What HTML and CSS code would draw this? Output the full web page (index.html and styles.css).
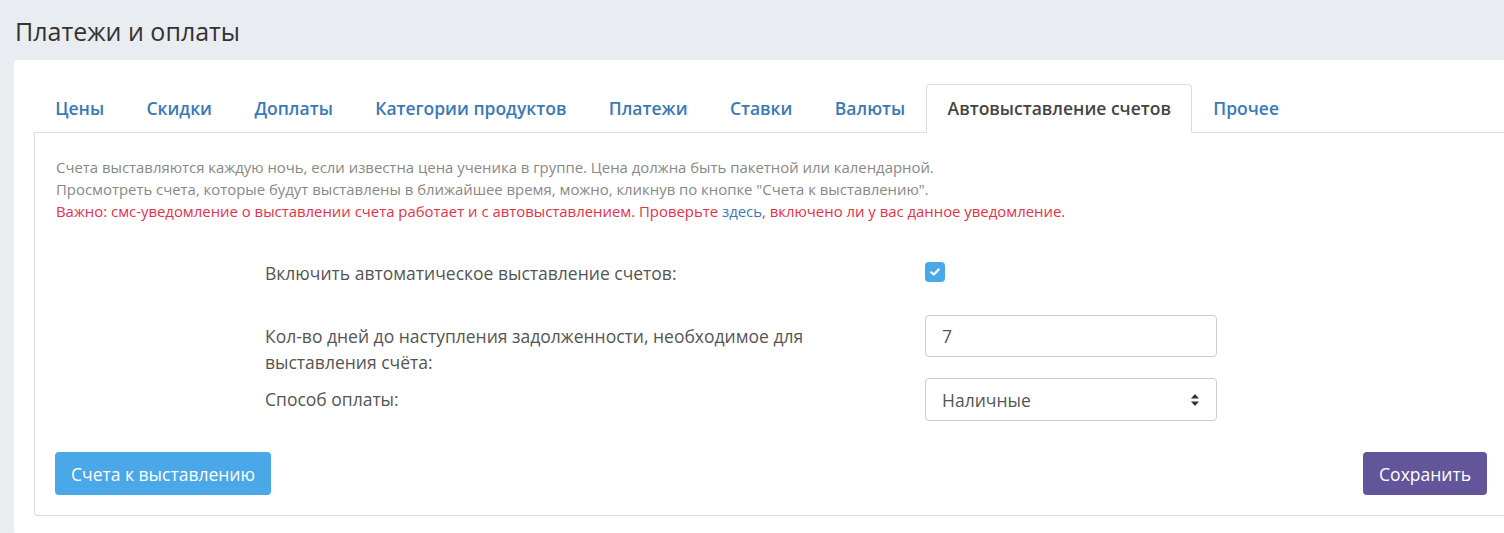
FILE: index.html
```html
<!DOCTYPE html>
<html>
<head>
    <title>Платежи и оплаты</title>
    <link rel="stylesheet" href="styles.css">
</head>
<body>
    <h1 class="page-title">Платежи и оплаты</h1>

    <div class="card">
        <ul class="nav-tabs">
            <li><a href="#">Цены</a></li>
            <li><a href="#">Скидки</a></li>
            <li><a href="#">Доплаты</a></li>
            <li><a href="#">Категории продуктов</a></li>
            <li><a href="#">Платежи</a></li>
            <li><a href="#">Ставки</a></li>
            <li><a href="#">Валюты</a></li>
            <li class="active"><a href="#">Автовыставление счетов</a></li>
            <li><a href="#">Прочее</a></li>
        </ul>

        <div class="tab-panel">
            <div class="help-text">
                <p>Счета выставляются каждую ночь, если известна цена ученика в группе. Цена должна быть пакетной или календарной.</p>
                <p>Просмотреть счета, которые будут выставлены в ближайшее время, можно, кликнув по кнопке "Счета к выставлению".</p>
                <p class="warn">Важно: смс-уведомление о выставлении счета работает и с автовыставлением. Проверьте <a href="#">здесь</a>, включено ли у вас данное уведомление.</p>
            </div>

            <form class="settings" onsubmit="return false;">
                <div class="form-row row-check">
                    <label for="auto">Включить автоматическое выставление счетов:</label>
                    <div class="control">
                        <span class="checkbox" id="auto">
                            <svg width="10" height="8" viewBox="0 0 10 8"><path d="M1.3 4.3 L3.8 6.5 L8.7 1.5" fill="none" stroke="#fff" stroke-width="2.2" stroke-linecap="round" stroke-linejoin="round"/></svg>
                        </span>
                    </div>
                </div>
                <div class="form-row row-days">
                    <label for="days">Кол-во дней до наступления задолженности, необходимое для выставления счёта:</label>
                    <div class="control">
                        <input type="text" id="days" value="7">
                    </div>
                </div>
                <div class="form-row">
                    <label for="method">Способ оплаты:</label>
                    <div class="control">
                        <div class="select" id="method">
                            <span>Наличные</span>
                            <svg width="10" height="14" viewBox="0 0 10 14"><path d="M5 1 L9 5.5 H1 Z M5 13 L9 8.5 H1 Z" fill="#333"/></svg>
                        </div>
                    </div>
                </div>

                <div class="actions">
                    <button type="button" class="btn btn-blue">Счета к выставлению</button>
                    <button type="submit" class="btn btn-purple">Сохранить</button>
                </div>
            </form>
        </div>
    </div>
</body>
</html>
```

FILE: styles.css
```css
html, body {
    overflow: hidden;
}

body {
    background-color: #e9ecf1;
    color: #555;
    font-family: "Open Sans", Arial, sans-serif;
    margin: 0;
    padding: 0 0 0 14px;
}

.page-title {
    font-size: 25px;
    font-weight: 400;
    color: #333;
    margin: 0;
    padding: 14px 0 0 1px;
    line-height: 34px;
    height: 46px;
}

.card {
    background-color: white;
    border-radius: 4px;
    width: 1474px;
    padding: 24px 20px 18px 20px;
}

.nav-tabs {
    list-style: none;
    margin: 0;
    padding: 0;
    display: flex;
    border-bottom: 1px solid #ddd;
}

.nav-tabs li {
    margin-bottom: -1px;
}

.nav-tabs a {
    display: block;
    padding: 11px 20.2px 12px;
    font-size: 17.5px;
    line-height: 24px;
    font-weight: 600;
    color: #3a79b7;
    text-decoration: none;
    border: 1px solid transparent;
    border-radius: 4px 4px 0 0;
}

.nav-tabs .active a {
    color: #444;
    background-color: white;
    border-color: #ddd #ddd white;
}

.tab-panel {
    border: 1px solid #ddd;
    border-top: none;
    border-radius: 0 0 0 4px;
    padding: 23px 20px 20px 20px;
}

.help-text {
    font-size: 14.9px;
    line-height: 22px;
    color: #888;
    padding-left: 1px;
}

.help-text p {
    margin: 0;
}

.help-text .warn {
    color: #e8304a;
}

.help-text a {
    color: #3a79b7;
    text-decoration: none;
}

.settings {
    margin-top: 30px;
}

.form-row {
    display: grid;
    grid-template-columns: 580px 292px;
    column-gap: 80px;
    padding-left: 210px;
    margin-bottom: 3px;
}

.form-row label {
    font-size: 17.5px;
    line-height: 26px;
    padding-top: 8px;
    color: #555;
}

.row-check {
    margin-bottom: 29px;
}

.row-check .control {
    padding-top: 10px;
}

.checkbox {
    display: flex;
    align-items: center;
    justify-content: center;
    width: 20px;
    height: 20px;
    border-radius: 4px;
    background-color: #4aa8e8;
}

.control input,
.select {
    box-sizing: border-box;
    width: 292px;
    height: 43px;
    border: 1px solid #ccc;
    border-radius: 4px;
    padding: 0 16px;
    font-family: "Open Sans", Arial, sans-serif;
    font-size: 17.5px;
    color: #555;
    background: white;
}

.control input {
    height: 42px;
}

.select {
    display: flex;
    align-items: center;
    justify-content: space-between;
    padding-right: 16px;
}

.actions {
    display: flex;
    justify-content: space-between;
    margin-top: 31px;
}

.btn {
    border: none;
    border-radius: 4px;
    color: white;
    font-family: "Open Sans", Arial, sans-serif;
    font-size: 17.5px;
    height: 43px;
    padding: 0 16px;
    cursor: pointer;
}

.btn-blue {
    background-color: #4aa8e8;
}

.btn-purple {
    background-color: #62559a;
}
```
